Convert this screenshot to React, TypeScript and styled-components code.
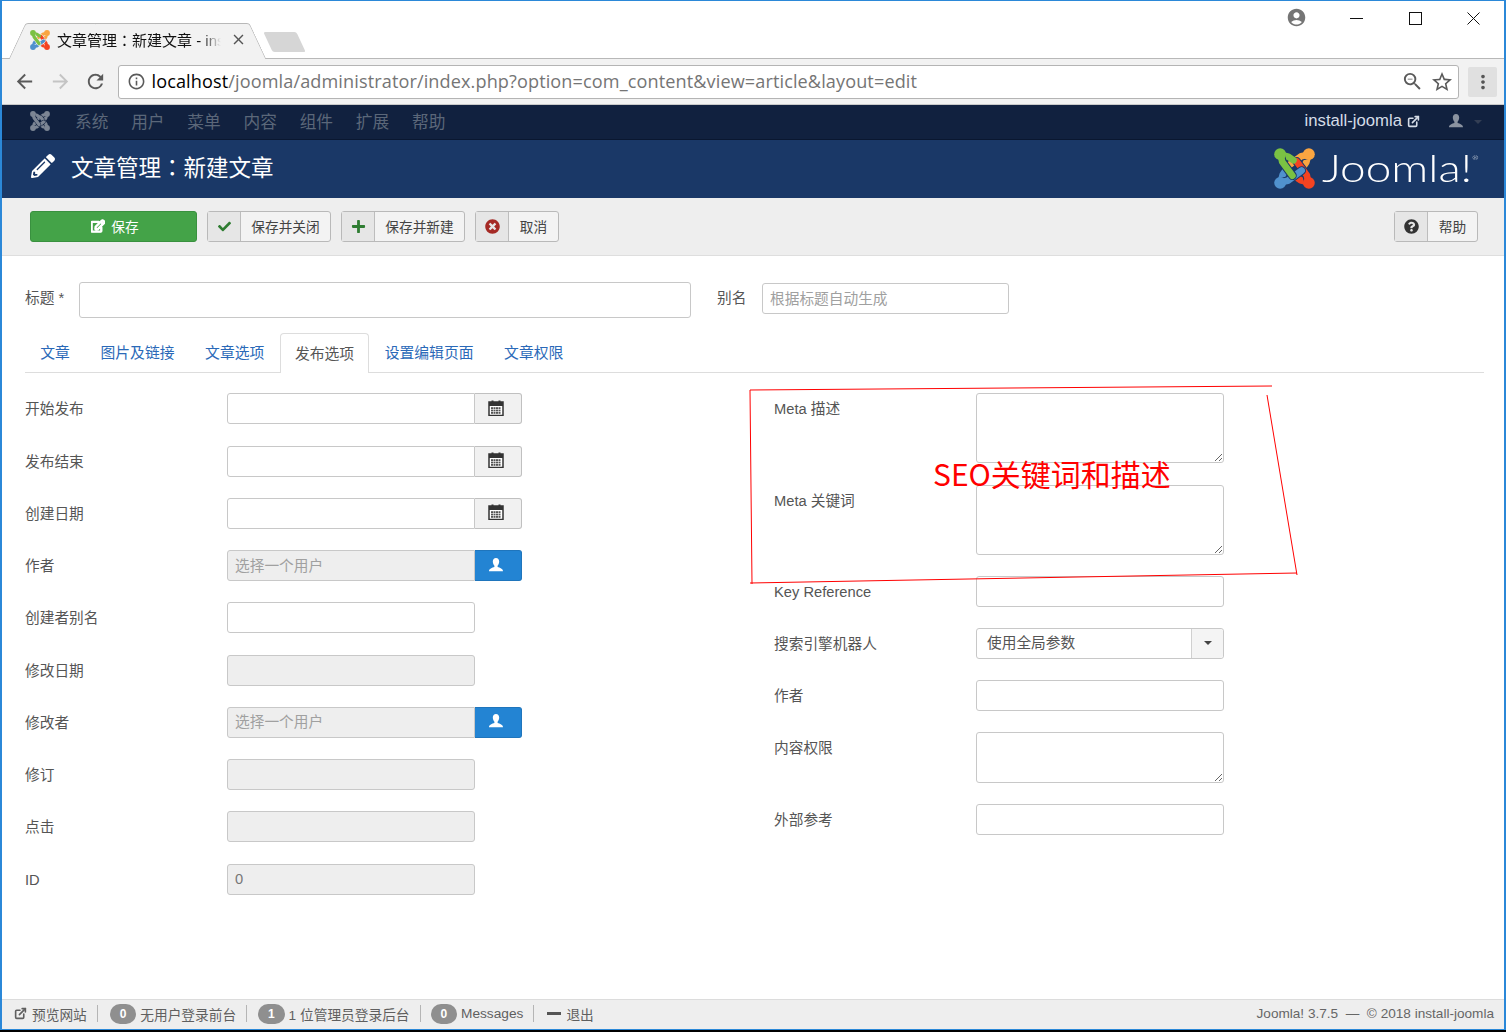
import React from "react";
import styled, { createGlobalStyle } from "styled-components";
import {
  MdArrowBack, MdArrowForward, MdRefresh, MdInfoOutline, MdStarBorder, MdZoomOut, MdMoreVert, MdAccountCircle, MdClose,
} from "react-icons/md";
import { FaPencilAlt, FaRegEdit, FaCheck, FaPlus, FaTimesCircle, FaQuestionCircle } from "react-icons/fa";
import { ExternalLink } from "lucide-react";

const sans = `"Liberation Sans", "Noto Sans CJK SC", sans-serif`;
const titleSans = `"Liberation Sans", "Noto Sans CJK TC", sans-serif`;

const Global = createGlobalStyle`
  html, body { margin: 0; padding: 0; background: #000; overflow: hidden; }
  body { font-family: ${sans}; }
  * { box-sizing: border-box; }
`;

const Screen = styled.div`
  width: 1506px;
  height: 1032px;
  background: #000;
`;
const Win = styled.div`
  position: relative;
  width: 1506px;
  height: 1030px;
  display: flex;
  flex-direction: column;
  background: #fff;
  border: solid #2b88d8;
  border-width: 1px 2px 1px 2px;
  overflow: hidden;
`;

/* browser chrome */
const TitleBar = styled.div`
  height: 58px;
  flex: none;
  display: flex;
  align-items: flex-end;
  justify-content: space-between;
  background: #fff;
  border-bottom: 1px solid #b8b8b8;
`;
const TabStrip = styled.div`
  display: flex;
  align-items: flex-end;
`;
const Tab = styled.div`
  position: relative;
  width: 257px;
  height: 36px;
  margin-left: 7px;
  margin-bottom: -1px;
  padding: 0 0 3px 21px;
  display: flex;
  align-items: center;
  z-index: 1;
  &::before, &::after {
    content: "";
    position: absolute;
    top: 0;
    bottom: 0;
    width: 60%;
    background: #f2f2f2;
    border-top: 1px solid #b8b8b8;
    z-index: -1;
  }
  &::before {
    left: 8px;
    transform: skewX(-25deg);
    border-left: 1px solid #b8b8b8;
    border-top-left-radius: 3px;
  }
  &::after {
    right: 8px;
    transform: skewX(25deg);
    border-right: 1px solid #b8b8b8;
    border-top-right-radius: 3px;
  }
`;
const TabTitle = styled.span`
  width: 164px;
  margin-left: 7px;
  font-family: ${titleSans};
  font-size: 15px;
  color: #111;
  white-space: nowrap;
  overflow: hidden;
  -webkit-mask-image: linear-gradient(to right, #000 88%, transparent 100%);
  mask-image: linear-gradient(to right, #000 88%, transparent 100%);
`;
const TabClose = styled.span`
  display: flex;
  margin-left: 9px;
  color: #555;
  font-size: 17px;
`;
const NewTab = styled.div`
  width: 33px;
  height: 20px;
  margin: 0 0 6px 2px;
  background: #d6d6d6;
  border-radius: 2px;
  transform: skewX(25deg);
`;
const WinControls = styled.div`
  align-self: flex-start;
  display: flex;
  align-items: center;
  height: 35px;
  padding-right: 1px;
`;
const Profile = styled.span`
  display: flex;
  font-size: 21px;
  color: #757575;
  margin: -2px 21px 0 0;
`;
const WinBtn = styled.span`
  width: 58.5px;
  display: flex;
  justify-content: center;
  color: #111;
`;
const Toolbar = styled.div`
  height: 46px;
  flex: none;
  display: flex;
  align-items: center;
  background: #f2f2f2;
  border-bottom: 1px solid #c9c9c9;
  padding: 0 7px 0 5px;
`;
const NavIcon = styled.span<{ $c: string }>`
  width: 35.5px;
  display: flex;
  justify-content: center;
  font-size: 23px;
  color: ${(p) => p.$c};
`;
const Omni = styled.div`
  flex: 1;
  height: 34px;
  margin: 0 9px 0 4px;
  display: flex;
  align-items: center;
  background: #fff;
  border: 1px solid #b4b4b4;
  border-radius: 3px;
  padding: 0 4px 0 8px;
`;
const OmniIcon = styled.span<{ $s: number; $gap?: number }>`
  display: flex;
  font-size: ${(p) => p.$s}px;
  color: #5a5a5a;
  margin-left: ${(p) => p.$gap ?? 0}px;
`;
const Url = styled.span`
  flex: 1;
  margin: -2px 0 0 6px;
  font-family: "Open Sans", "Noto Sans", sans-serif;
  font-size: 18.1px;
  letter-spacing: 0.11px;
  color: #757575;
  white-space: nowrap;
  b { font-weight: 400; color: #000; }
`;
const MenuBtn = styled.span`
  width: 29px;
  height: 30px;
  display: flex;
  align-items: center;
  justify-content: center;
  background: #e0e0e0;
  border-radius: 2px;
  font-size: 22px;
  color: #555;
`;

/* joomla admin */
const NavBar = styled.div`
  height: 35px;
  flex: none;
  display: flex;
  align-items: center;
  background: #11213f;
  border-bottom: 1px solid #0a1730;
  padding: 0 22px 2px 28px;
`;
const NavItems = styled.div`
  flex: 1;
  display: flex;
  gap: 22.8px;
  margin-left: 25px;
`;
const NavItem = styled.span`
  font-size: 16.7px;
  color: #5b6779;
`;
const SiteLink = styled.span`
  display: flex;
  align-items: center;
  gap: 5px;
  font-size: 16.7px;
  color: #d5dde8;
  svg { margin-top: 1px; }
`;
const NavUser = styled.span`
  display: flex;
  margin-left: 28px;
  font-size: 16px;
  color: #8b93a0;
`;
const Caret = styled.span`
  width: 0;
  height: 0;
  margin: 2px 0 0 10px;
  border: 4.5px solid transparent;
  border-top-color: #333e54;
  border-bottom: 0;
`;
const Header = styled.div`
  height: 58px;
  flex: none;
  display: flex;
  align-items: center;
  background: #1a3867;
  padding: 0 26px 0 29px;
`;
const HeaderIcon = styled.span`
  display: flex;
  font-size: 24px;
  color: #fff;
  margin-top: -6px;
`;
const PageTitle = styled.h1`
  flex: 1;
  margin: -6px 0 0 16px;
  font-family: ${titleSans};
  font-size: 22.5px;
  font-weight: 400;
  color: #fff;
`;
const Brand = styled.div`
  display: flex;
  align-items: center;
  gap: 7px;
  margin-top: -2px;
`;
const Wordmark = styled.span`
  display: inline-block;
  font-family: "Lato", sans-serif;
  font-size: 37px;
  font-weight: 300;
  line-height: 40px;
  width: 156px;
  color: #fff;
  letter-spacing: 0;
  white-space: nowrap;
  transform: scaleX(1.24);
  transform-origin: left center;
  sup { font-size: 6px; vertical-align: 22px; line-height: 0; }
`;
const SubHead = styled.div`
  height: 58px;
  flex: none;
  display: flex;
  align-items: flex-start;
  gap: 10px;
  background: #eeeeee;
  border-bottom: 1px solid #dedede;
  padding: 13px 26px 0 28px;
`;
const Spacer = styled.div`
  flex: 1;
`;
const SaveBtn = styled.button`
  width: 167px;
  height: 31px;
  display: flex;
  align-items: center;
  justify-content: center;
  gap: 6px;
  padding: 0 0 2px 3px;
  font-family: ${sans};
  font-size: 13.7px;
  color: #fff;
  background: #44a348;
  border: 1px solid #39913f;
  border-radius: 3px;
  svg { font-size: 14px; stroke: currentColor; stroke-width: 50; }
`;
const ToolBtn = styled.button<{ $w: number }>`
  width: ${(p) => p.$w}px;
  height: 31px;
  display: flex;
  align-items: stretch;
  padding: 0;
  font-family: ${sans};
  font-size: 13.7px;
  color: #444;
  background: #f3f3f3;
  border: 1px solid #b9b9b9;
  border-radius: 3px;
`;
const ToolIcon = styled.span<{ $c: string; $s: number }>`
  width: 33px;
  flex: none;
  display: flex;
  align-items: center;
  justify-content: center;
  padding-bottom: 1px;
  background: #e6e6e6;
  border-right: 1px solid #bdbdbd;
  color: ${(p) => p.$c};
  font-size: ${(p) => p.$s}px;
`;
const ToolText = styled.span`
  flex: 1;
  align-self: center;
  text-align: center;
  padding-bottom: 2px;
`;

const Content = styled.div`
  flex: 1;
  min-height: 0;
  padding: 26px 20px 0 23px;
  background: #fff;
`;
const TitleRow = styled.div`
  display: flex;
  align-items: center;
  height: 36px;
`;
const InlineLabel = styled.label<{ $w: number }>`
  width: ${(p) => p.$w}px;
  flex: none;
  padding-bottom: 7px;
  font-size: 14.7px;
  color: #555;
`;
const Field = styled.input<{ $w: number; $h?: number; $off?: boolean }>`
  width: ${(p) => p.$w}px;
  height: ${(p) => p.$h ?? 31}px;
  flex: none;
  padding: 0 7px;
  font-family: ${sans};
  font-size: 14.7px;
  color: #777;
  background: ${(p) => (p.$off ? "#eeeeee" : "#fff")};
  border: 1px solid #c8c8c8;
  border-radius: 3px;
  outline: none;
  &::placeholder { color: #a0a0a0; opacity: 1; }
`;
const TitleField = styled(Field)`
  margin-right: 26px;
`;
const AliasField = styled(Field)`
  margin-bottom: 3px;
`;
const TabBar = styled.div`
  display: flex;
  height: 40px;
  margin-top: 15px;
  border-bottom: 1px solid #dddddd;
`;
const TabLink = styled.a<{ $on?: boolean }>`
  display: flex;
  align-items: center;
  height: 40px;
  padding: 0 ${(p) => (p.$on ? 14.3 : 15.3)}px 3px;
  font-size: 14.8px;
  color: ${(p) => (p.$on ? "#555" : "#2a69b8")};
  background: ${(p) => (p.$on ? "#fff" : "transparent")};
  border: ${(p) => (p.$on ? "1px solid #dddddd" : "0")};
  border-bottom: 0;
  border-radius: 4px 4px 0 0;
`;
const Columns = styled.div`
  display: grid;
  grid-template-columns: 749px 1fr;
  padding-top: 20.4px;
`;
const Col = styled.div<{ $gap: number }>`
  display: flex;
  flex-direction: column;
  gap: ${(p) => p.$gap}px;
`;
const Row = styled.div`
  display: flex;
  align-items: flex-start;
`;
const RowLabel = styled.label`
  width: 202px;
  height: 31px;
  flex: none;
  font-size: 14.7px;
  line-height: 32px;
  color: #555;
`;
const Area = styled.textarea<{ $h: number }>`
  display: block;
  width: 248px;
  height: ${(p) => p.$h}px;
  background: #fff;
  border: 1px solid #c8c8c8;
  border-radius: 3px;
  outline: none;
  resize: vertical;
`;
const Group = styled.div`
  display: flex;
`;
const GroupField = styled(Field)`
  border-radius: 3px 0 0 3px;
`;
const Addon = styled.span<{ $blue?: boolean }>`
  width: 47px;
  height: 31px;
  display: flex;
  align-items: center;
  justify-content: center;
  padding: 0 4px 2px 0;
  color: ${(p) => (p.$blue ? "#fff" : "#333")};
  background: ${(p) => (p.$blue ? "#2384d3" : "#f1f1f1")};
  border: 1px solid ${(p) => (p.$blue ? "#1f75bc" : "#c0c0c0")};
  border-left: 0;
  border-radius: 0 3px 3px 0;
  font-size: 16px;
`;
const Select = styled.div`
  width: 248px;
  height: 31px;
  display: flex;
  align-items: stretch;
  background: #fff;
  border: 1px solid #c8c8c8;
  border-radius: 3px;
`;
const SelectValue = styled.span`
  flex: 1;
  align-self: center;
  padding: 0 0 3px 10px;
  font-size: 14.7px;
  color: #555;
`;
const SelectArrow = styled.span`
  width: 32px;
  display: flex;
  align-items: center;
  justify-content: center;
  background: #f4f4f4;
  border-left: 1px solid #d0d0d0;
  border-radius: 0 3px 3px 0;
  &::after {
    content: "";
    border: 4px solid transparent;
    border-top-color: #444;
    border-bottom: 0;
  }
`;

const Footer = styled.div`
  height: 30px;
  flex: none;
  display: flex;
  align-items: center;
  justify-content: space-between;
  background: #eeeeee;
  border-top: 1px solid #dcdcdc;
  padding: 0 10px 2px 12px;
  font-size: 13.7px;
  color: #5f5f5f;
`;
const FooterLeft = styled.div`
  display: flex;
  align-items: center;
`;
const FooterItem = styled.span<{ $after?: number }>`
  display: flex;
  align-items: center;
  gap: 4px;
  height: 17px;
  padding-right: 10px;
  margin-right: ${(p) => p.$after ?? 11}px;
  border-right: 1px solid #b5b5b5;
  &:first-child { gap: 5px; }
  &:last-child { border-right: 0; margin-right: 0; }
`;
const Badge = styled.span`
  width: 26.5px;
  height: 20px;
  display: flex;
  align-items: center;
  justify-content: center;
  border-radius: 10px;
  background: #8f8f8f;
  color: #fff;
  font-size: 12px;
  font-weight: 700;
`;
const Dash = styled.span`
  width: 14px;
  height: 3px;
  background: #555;
  margin-right: 1px;
`;
const FooterRight = styled.span`
  font-size: 13.6px;
  color: #666;
`;

/* hand annotation over the page */
const Marks = styled.svg`
  position: absolute;
  left: -2px;
  top: -1px;
  width: 1506px;
  height: 1032px;
  pointer-events: none;
`;
const Note = styled.span`
  position: absolute;
  left: 931px;
  top: 450px;
  font-family: "Noto Sans CJK SC", sans-serif;
  font-size: 30px;
  line-height: 44px;
  color: #ff0000;
  white-space: nowrap;
`;

const Mark = ({ size, mono, bg }: { size: number; mono?: string; bg: string }) => {
  const band = "M6.500 6.500L8 13.500L18 27";
  const hook = "M6.500 6.500L14 8.500L19 12";
  const arms = [
    { c: "#f9a541", r: 90 },
    { c: "#f44321", r: 180 },
    { c: "#5091cd", r: 270 },
    { c: "#7ac143", r: 0 },
  ];
  return (
    <svg width={size} height={size} viewBox="0 0 40 40" fill="none" strokeLinecap="round" strokeLinejoin="round">
      {arms.map((a) => (
        <g key={a.c} transform={`rotate(${a.r} 20 20)`}>
          <path d={hook} stroke={mono ?? a.c} strokeWidth={6.500} />
          <path d={band} stroke={bg} strokeWidth={8.500} />
          <path d={band} stroke={mono ?? a.c} strokeWidth={6.500} />
          <circle cx={6} cy={6} r={5.800} fill={mono ?? a.c} />
        </g>
      ))}
    </svg>
  );
};

const Calendar = () => (
  <svg width="16" height="16" viewBox="0 0 16 16">
    <rect x="1" y="2" width="14" height="13.500" fill="#fff" stroke="#333" strokeWidth="1.500" />
    <rect x="1" y="2" width="14" height="4" fill="#333" />
    <rect x="3.500" y="0.500" width="2" height="3" fill="#333" />
    <rect x="10.500" y="0.500" width="2" height="3" fill="#333" />
    {[7.200, 9.600, 12].map((y) =>
      [3, 5.500, 8, 10.500].map((x) => <rect key={`${x}-${y}`} x={x} y={y} width="2" height="1.800" fill="#555" />)
    )}
  </svg>
);

const Bust = () => (
  <svg width="1em" height="1em" viewBox="0 0 16 16" fill="currentColor">
    <path d="M8 1c2 0 3.200 1.500 3.200 3.600C11.200 6.500 10.300 8 9.600 8.700v1.300c2.200.7 5.400 1.600 5.400 4.300H1c0-2.700 3.200-3.600 5.400-4.300V8.700C5.700 8 4.800 6.500 4.800 4.600 4.800 2.500 6 1 8 1z" />
  </svg>
);

const Title = "文章管理：新建文章";

const leftRows: { label: string; kind: "date" | "user" | "plain" | "off" | "value" }[] = [
  { label: "开始发布", kind: "date" },
  { label: "发布结束", kind: "date" },
  { label: "创建日期", kind: "date" },
  { label: "作者", kind: "user" },
  { label: "创建者别名", kind: "plain" },
  { label: "修改日期", kind: "off" },
  { label: "修改者", kind: "user" },
  { label: "修订", kind: "off" },
  { label: "点击", kind: "off" },
  { label: "ID", kind: "value" },
];

const LeftControl = ({ kind }: { kind: string }) => {
  if (kind === "date")
    return (
      <Group>
        <GroupField $w={248} />
        <Addon><Calendar /></Addon>
      </Group>
    );
  if (kind === "user")
    return (
      <Group>
        <GroupField $w={248} $off disabled placeholder="选择一个用户" />
        <Addon $blue><Bust /></Addon>
      </Group>
    );
  if (kind === "plain") return <Field $w={248} />;
  if (kind === "value") return <Field $w={248} $off disabled defaultValue="0" />;
  return <Field $w={248} $off disabled />;
};

export default function App() {
  return (
    <Screen>
      <Global />
      <Win>
        <TitleBar>
          <TabStrip>
            <Tab>
              <Mark size={20} bg="#f2f2f2" />
              <TabTitle>{Title} - install-joomla</TabTitle>
              <TabClose><MdClose /></TabClose>
            </Tab>
            <NewTab />
          </TabStrip>
          <WinControls>
            <Profile><MdAccountCircle /></Profile>
            <WinBtn>
              <svg width="13" height="13" viewBox="0 0 13 13"><path d="M0 6.500H13" stroke="currentColor" /></svg>
            </WinBtn>
            <WinBtn>
              <svg width="13" height="13" viewBox="0 0 13 13"><rect x=".5" y=".5" width="12" height="12" fill="none" stroke="currentColor" /></svg>
            </WinBtn>
            <WinBtn>
              <svg width="13" height="13" viewBox="0 0 13 13"><path d="M.5.5L12.500 12.500M12.500.5L.5 12.500" stroke="currentColor" /></svg>
            </WinBtn>
          </WinControls>
        </TitleBar>
        <Toolbar>
          <NavIcon $c="#5a5a5a"><MdArrowBack /></NavIcon>
          <NavIcon $c="#c4c4c4"><MdArrowForward /></NavIcon>
          <NavIcon $c="#5a5a5a"><MdRefresh /></NavIcon>
          <Omni>
            <OmniIcon $s={19}><MdInfoOutline /></OmniIcon>
            <Url><b>localhost</b>/joomla/administrator/index.php?option=com_content&amp;view=article&amp;layout=edit</Url>
            <OmniIcon $s={23}><MdZoomOut /></OmniIcon>
            <OmniIcon $s={24} $gap={6}><MdStarBorder /></OmniIcon>
          </Omni>
          <MenuBtn><MdMoreVert /></MenuBtn>
        </Toolbar>

        <NavBar>
          <Mark size={20} mono="#7c8594" bg="#11213f" />
          <NavItems>
            {["系统", "用户", "菜单", "内容", "组件", "扩展", "帮助"].map((t) => (
              <NavItem key={t}>{t}</NavItem>
            ))}
          </NavItems>
          <SiteLink>install-joomla <ExternalLink size={13} strokeWidth={3} /></SiteLink>
          <NavUser><Bust /></NavUser>
          <Caret />
        </NavBar>
        <Header>
          <HeaderIcon><FaPencilAlt /></HeaderIcon>
          <PageTitle>{Title}</PageTitle>
          <Brand>
            <Mark size={41} bg="#1a3867" />
            <Wordmark>Joomla!<sup>®</sup></Wordmark>
          </Brand>
        </Header>
        <SubHead>
          <SaveBtn><FaRegEdit />保存</SaveBtn>
          <ToolBtn $w={124}><ToolIcon $c="#2f7d32" $s={13}><FaCheck /></ToolIcon><ToolText>保存并关闭</ToolText></ToolBtn>
          <ToolBtn $w={124}><ToolIcon $c="#2f7d32" $s={15}><FaPlus /></ToolIcon><ToolText>保存并新建</ToolText></ToolBtn>
          <ToolBtn $w={84}><ToolIcon $c="#a52a25" $s={15}><FaTimesCircle /></ToolIcon><ToolText>取消</ToolText></ToolBtn>
          <Spacer />
          <ToolBtn $w={84}><ToolIcon $c="#333" $s={15}><FaQuestionCircle /></ToolIcon><ToolText>帮助</ToolText></ToolBtn>
        </SubHead>

        <Content>
          <TitleRow>
            <InlineLabel $w={54}>标题 *</InlineLabel>
            <TitleField $w={612} $h={36} />
            <InlineLabel $w={45}>别名</InlineLabel>
            <AliasField $w={247} placeholder="根据标题自动生成" />
          </TitleRow>
          <TabBar>
            <TabLink>文章</TabLink>
            <TabLink>图片及链接</TabLink>
            <TabLink>文章选项</TabLink>
            <TabLink $on>发布选项</TabLink>
            <TabLink>设置编辑页面</TabLink>
            <TabLink>文章权限</TabLink>
          </TabBar>
          <Columns>
            <Col $gap={21.250}>
              {leftRows.map((r) => (
                <Row key={r.label}>
                  <RowLabel>{r.label}</RowLabel>
                  <LeftControl kind={r.kind} />
                </Row>
              ))}
            </Col>
            <Col $gap={21.200}>
              <Row><RowLabel>Meta 描述</RowLabel><Area $h={70} /></Row>
              <Row><RowLabel>Meta 关键词</RowLabel><Area $h={70} /></Row>
              <Row><RowLabel>Key Reference</RowLabel><Field $w={248} /></Row>
              <Row><RowLabel>搜索引擎机器人</RowLabel><Select><SelectValue>使用全局参数</SelectValue><SelectArrow /></Select></Row>
              <Row><RowLabel>作者</RowLabel><Field $w={248} /></Row>
              <Row><RowLabel>内容权限</RowLabel><Area $h={50.500} /></Row>
              <Row><RowLabel>外部参考</RowLabel><Field $w={248} /></Row>
            </Col>
          </Columns>
        </Content>

        <Footer>
          <FooterLeft>
            <FooterItem $after={12}><ExternalLink size={13} strokeWidth={3} />预览网站</FooterItem>
            <FooterItem><Badge>0</Badge>无用户登录前台</FooterItem>
            <FooterItem $after={10}><Badge>1</Badge>1 位管理员登录后台</FooterItem>
            <FooterItem $after={13}><Badge>0</Badge>Messages</FooterItem>
            <FooterItem><Dash />退出</FooterItem>
          </FooterLeft>
          <FooterRight>Joomla! 3.7.5 &nbsp;—&nbsp; © 2018 install-joomla</FooterRight>
        </Footer>

        <Marks viewBox="0 0 1506 1032" fill="none" stroke="#ff0000" strokeWidth="1">
          <path d="M750 390L1272 386M750 390L752 584M750 583L1297 573M1267 395L1297 575" />
        </Marks>
        <Note>SEO关键词和描述</Note>
      </Win>
    </Screen>
  );
}
